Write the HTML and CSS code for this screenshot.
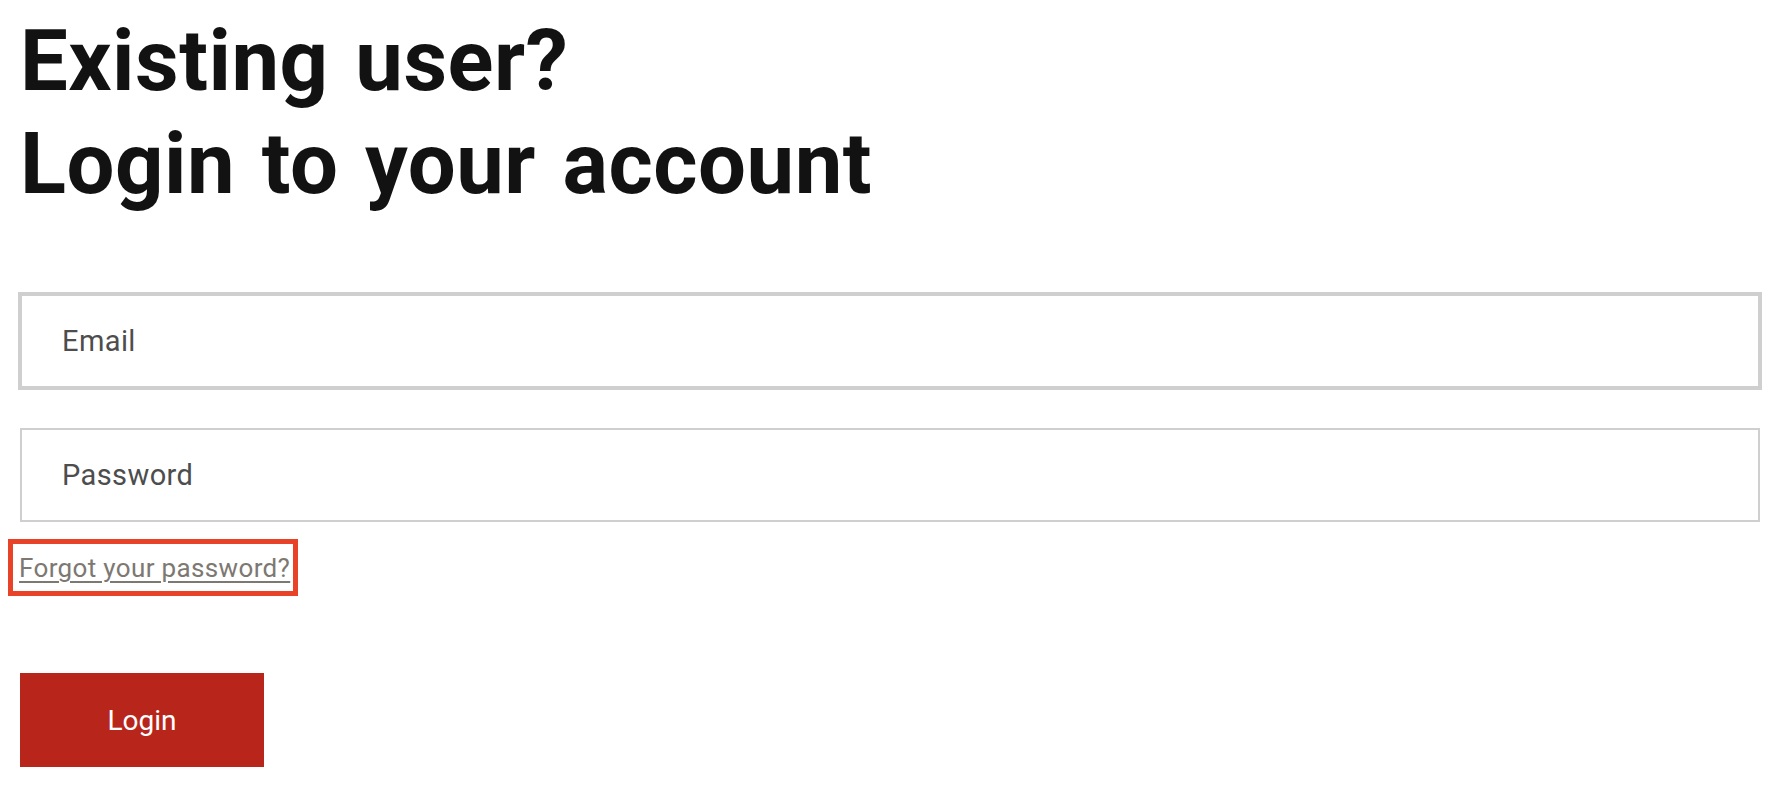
FILE: index.html
```html
<!DOCTYPE html>
<html lang="en">
<head>
<meta charset="utf-8">
<title>Login</title>
<link rel="stylesheet" href="styles.css">
</head>
<body>
<main class="page">
  <h1 class="title">Existing user?<br>Login to your account</h1>
  <form class="form">
    <input class="field field--focus" type="email" placeholder="Email">
    <input class="field field--pw" type="password" placeholder="Password">
    <div class="forgot-box"><a class="forgot" href="#">Forgot your password?</a></div>
    <button class="btn" type="button">Login</button>
  </form>
</main>
</body>
</html>
```

FILE: styles.css
```css
* { box-sizing: border-box; }
html, body { margin: 0; padding: 0; background: #fff; }
body { font-family: Roboto, "Liberation Sans", Arial, sans-serif; }

.page {
  padding: 10px 30px 0 20px;
}

.title {
  margin: 0;
  font-family: Roboto, "Liberation Sans", Arial, sans-serif;
  font-weight: 700;
  font-size: 85px;
  line-height: 103px;
  color: #121212;
  letter-spacing: 0.5px;
  word-spacing: 5px;
}

.form {
  display: flex;
  flex-direction: column;
  align-items: flex-start;
  margin-top: 78px;
}

.field {
  width: 100%;
  height: 94px;
  border: 2px solid #cfcfcf;
  padding: 0 40px;
  font-family: Roboto, "Liberation Sans", Arial, sans-serif;
  font-size: 29px;
  letter-spacing: 0.4px;
  color: #4d4d4d;
  background: #fff;
  outline: none;
  border-radius: 0;
}
.field::placeholder { color: #4d4d4d; opacity: 1; }
.field--focus { box-shadow: 0 0 0 2px #cfcfcf; }
.field--pw { margin-top: 40px; }

.forgot-box {
  margin-top: 17px;
  margin-left: -12px;
  border: 5px solid #e84229;
  padding: 9px 3px 7px 6px;
  font-size: 26px;
  line-height: 31px;
}
.forgot {
  font-size: 26px;
  letter-spacing: 0.35px;
  color: #7d7872;
  text-decoration: underline;
  text-decoration-thickness: 2px;
  text-underline-offset: 4px;
}

.btn {
  margin-top: 77px;
  width: 244px;
  height: 94px;
  border: 0;
  border-radius: 0;
  background: #b8261b;
  color: #fff;
  font-family: Roboto, "Liberation Sans", Arial, sans-serif;
  font-size: 28px;
  padding: 0;
  cursor: pointer;
}
```
